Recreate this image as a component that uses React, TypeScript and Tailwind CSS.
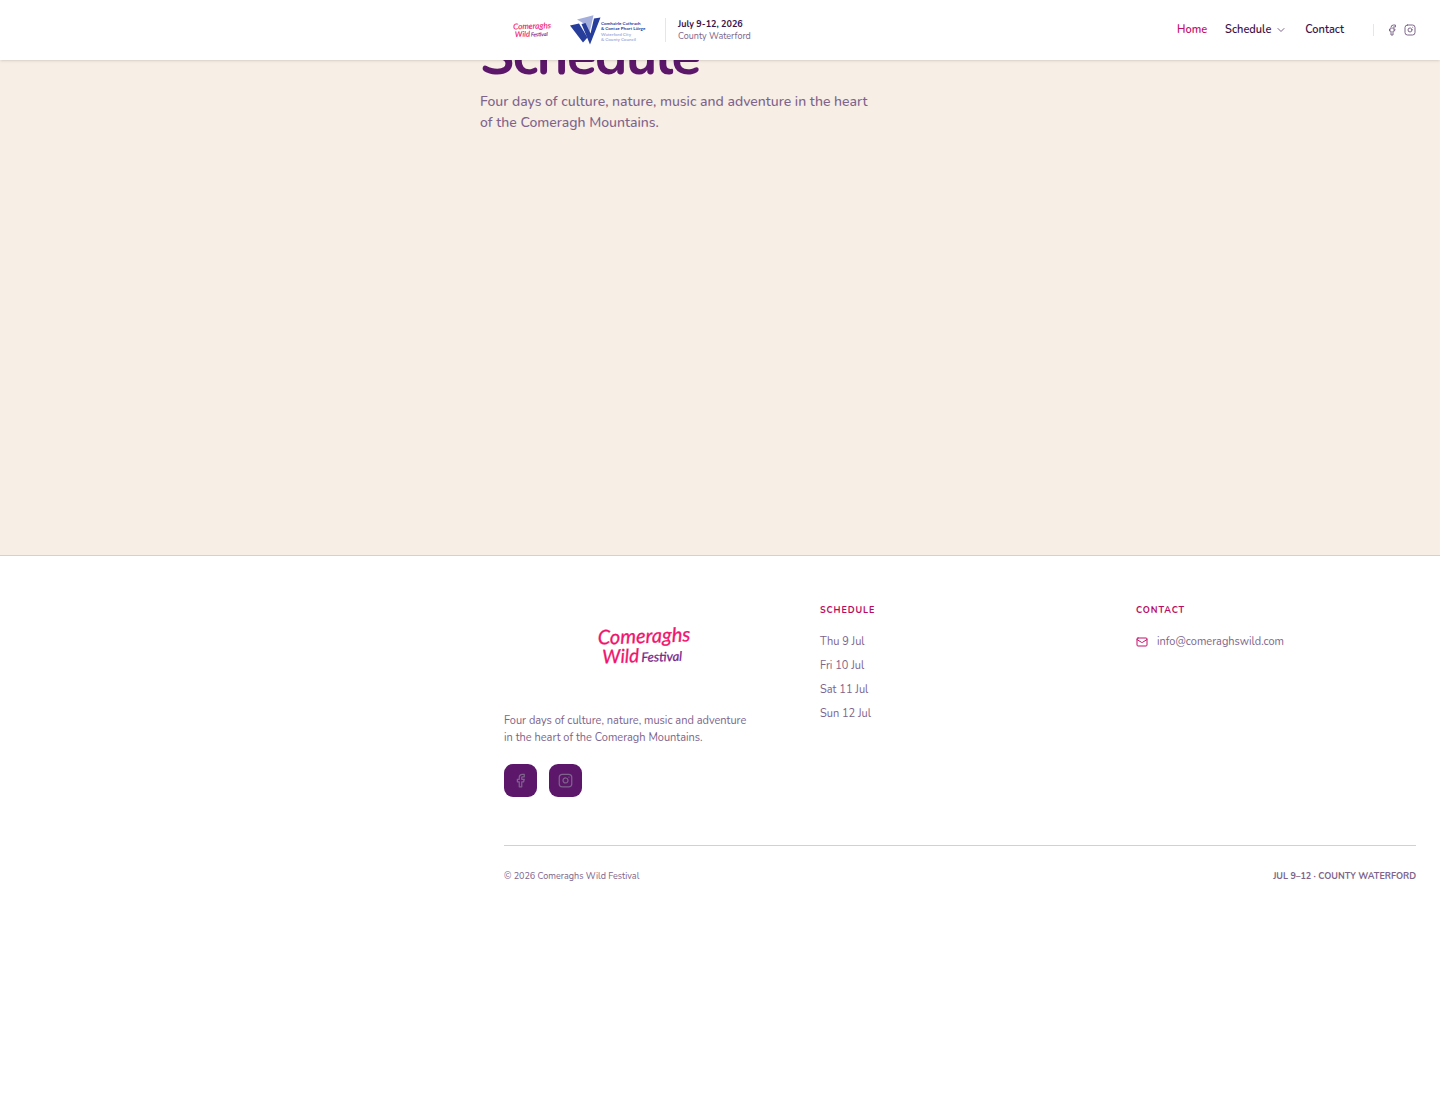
import { ChevronDown, Facebook, Instagram, Mail } from "lucide-react"

const DAYS = ["Thu 9 Jul", "Fri 10 Jul", "Sat 11 Jul", "Sun 12 Jul"]

function FestivalLogo({ className }: { className: string }) {
  return (
    <svg viewBox="0 0 98 42" className={className} role="img" aria-label="Comeraghs Wild Festival">
      <g transform="rotate(-2 48 21)" fontStyle="italic" fontFamily="Lato, sans-serif">
        <text x="3" y="18" fontSize="20" fill="#f0146e" stroke="#f0146e" strokeWidth="0.3">Comeraghs</text>
        <text x="7" y="37" fontSize="19" fill="#f0146e" stroke="#f0146e" strokeWidth="0.3">Wild</text>
        <text x="46" y="37" fontSize="13" fill="#7a1f8a" stroke="#7a1f8a" strokeWidth="0.3">Festival</text>
      </g>
    </svg>
  )
}

function CouncilLogo() {
  return (
    <svg viewBox="0 0 80 30" className="h-[30px] w-20" role="img" aria-label="Waterford City and County Council">
      <path d="M7 4.500 23.500.300 19.500 18 15.500 9.500z" fill="#a3aedd" />
      <path d="M0 10.500 9 8.500 17.500 22.500 13 27.500z" fill="#263d9b" />
      <path d="M11.500 9 15.500 8 20.500 18.500 24 3.500 30.500 2.500 20 29.500z" fill="#263d9b" />
      <g fontFamily="Lato, sans-serif" fontSize="4.500" fontWeight="700">
        <text x="31" y="9.500" fill="#263d9b">Comhairle Cathrach</text>
        <text x="31" y="15" fill="#263d9b">&amp; Contae Phort Láirge</text>
        <text x="31" y="20.500" fill="#a3aedd">Waterford City</text>
        <text x="31" y="26" fill="#a3aedd">&amp; County Council</text>
      </g>
    </svg>
  )
}

function Header() {
  return (
    <header className="sticky top-0 z-10 bg-white shadow-sm">
      <div className="ml-auto flex h-[60px] w-2/3 items-center justify-between px-6">
        <div className="flex items-center">
          <a href="#" className="ml-2">
            <FestivalLogo className="h-[18px] w-10" />
          </a>
          <a href="#" className="ml-[18px]">
            <CouncilLogo />
          </a>
          <div className="ml-[15px] h-6 border-l border-[#e8e4ea]" />
          <div className="ml-3 text-[9px] leading-3">
            <p className="font-bold text-[#3b1248]">July 9-12, 2026</p>
            <p className="text-[#7d648b]">County Waterford</p>
          </div>
        </div>
        <div className="flex items-center">
          <nav className="flex items-center gap-[18px] text-[11px] font-semibold text-[#3b1248]">
            <a href="#" className="text-[#c2106a]">Home</a>
            <button type="button" className="flex items-center gap-1">
              Schedule
              <ChevronDown className="size-3 text-[#7d648b]" />
            </button>
            <a href="#contact">Contact</a>
          </nav>
          <div className="ml-[29px] flex items-center gap-[6px] border-l border-[#e8e4ea] pl-3 text-[#7d648b]">
            <a href="#" aria-label="Facebook"><Facebook className="size-3" /></a>
            <a href="#" aria-label="Instagram"><Instagram className="size-3" /></a>
          </div>
        </div>
      </div>
    </header>
  )
}

function Footer() {
  return (
    <footer className="border-t border-[#d6d1c7] bg-white text-[11px] text-[#7d648b]">
      <div className="ml-auto w-2/3 px-6 pt-12 pb-6">
        <div className="grid grid-cols-3 gap-9">
          <div>
            <div className="flex h-[84px] items-center justify-center">
              <FestivalLogo className="h-[42px] w-[98px]" />
            </div>
            <p className="mt-6 max-w-[250px] leading-[17px]">
              Four days of culture, nature, music and adventure in the heart of the Comeragh Mountains.
            </p>
            <div className="mt-[18px] flex gap-3 text-[#7d648b]">
              <a href="#" aria-label="Facebook" className="flex size-[33px] items-center justify-center rounded-[9px] bg-[#5c176b]">
                <Facebook className="size-[15px]" />
              </a>
              <a href="#" aria-label="Instagram" className="flex size-[33px] items-center justify-center rounded-[9px] bg-[#5c176b]">
                <Instagram className="size-[15px]" />
              </a>
            </div>
          </div>
          <div>
            <h2 className="text-[9px] leading-3 font-bold tracking-widest text-[#b80a62] uppercase">Schedule</h2>
            <ul className="mt-[18px] space-y-[9px] leading-[15px]">
              {DAYS.map((d) => (
                <li key={d}><a href="#">{d}</a></li>
              ))}
            </ul>
          </div>
          <div id="contact">
            <h2 className="text-[9px] leading-3 font-bold tracking-widest text-[#b80a62] uppercase">Contact</h2>
            <a href="mailto:info@comeraghswild.com" className="mt-[18px] flex items-center gap-[9px] leading-[15px]">
              <Mail className="size-3 text-[#c2106a]" />
              info@comeraghswild.com
            </a>
          </div>
        </div>
        <div className="mt-12 flex items-center justify-between border-t border-[#d6d1c7] pt-6 text-[9px] leading-3">
          <p>© 2026 Comeraghs Wild Festival</p>
          <p className="font-bold uppercase">Jul 9–12 · County Waterford</p>
        </div>
      </div>
    </footer>
  )
}

export default function App() {
  return (
    <div className="min-h-screen bg-white font-['Nunito','Noto_Sans',sans-serif]">
      <Header />
      <main className="-mt-9 bg-[#f7eee5]">
        <div className="ml-auto w-2/3 pb-[422px]">
          <h1 className="text-[54px] leading-16 font-bold tracking-tight text-[#5c176b]">Schedule</h1>
          <p className="mt-[3px] max-w-[400px] text-[14px] leading-[21px] font-medium text-[#7d648b]">
            Four days of culture, nature, music and adventure in the heart of the Comeragh Mountains.
          </p>
        </div>
      </main>
      <Footer />
    </div>
  )
}
